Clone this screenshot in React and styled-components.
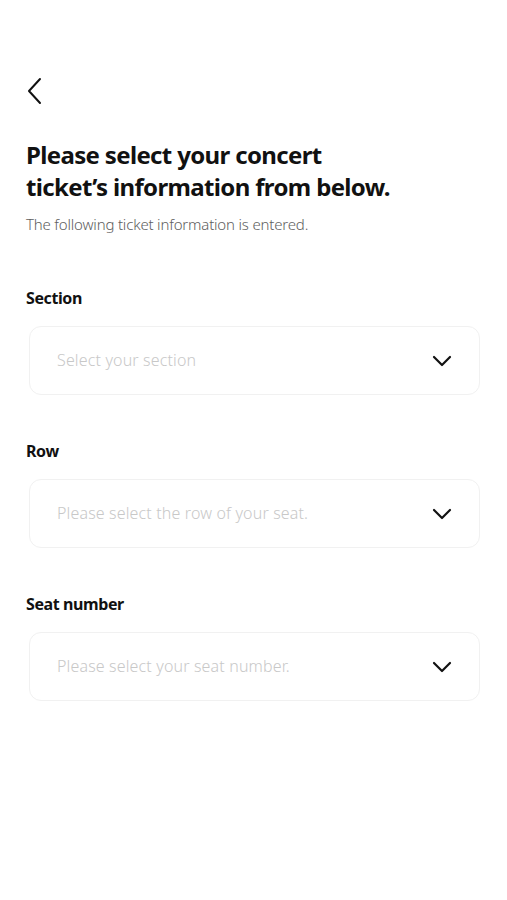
import React from 'react';
import styled, { createGlobalStyle } from 'styled-components';

const GlobalStyle = createGlobalStyle`
  html, body {
    margin: 0;
    padding: 0;
    background: #ffffff;
  }
  body {
    font-family: "Noto Sans", "Noto Sans CJK KR", sans-serif;
    color: #111;
  }
`;

const Screen = styled.div`
  width: 507px;
  min-height: 900px;
  background: #fff;
  padding: 76px 26px 0 26px;
  box-sizing: border-box;
`;

const BackButton = styled.button`
  display: flex;
  align-items: center;
  justify-content: center;
  width: 20px;
  height: 30px;
  padding: 0;
  margin: 0 0 0 -1px;
  border: none;
  background: none;
  cursor: pointer;
`;

const Title = styled.h1`
  margin: 33px 0 0 0;
  font-size: 24px;
  line-height: 32px;
  font-weight: 700;
  letter-spacing: -0.65px;
  color: #111;
`;

const Subtitle = styled.p`
  margin: 10px 0 0 0;
  font-size: 15px;
  line-height: 22px;
  font-weight: 300;
  letter-spacing: -0.18px;
  color: #5e5e5e;
`;

const Form = styled.div`
  display: flex;
  flex-direction: column;
  gap: 45px;
  margin-top: 52px;
`;

const Field = styled.div`
  display: flex;
  flex-direction: column;
`;

const Label = styled.div`
  font-size: 16px;
  line-height: 22px;
  font-weight: 700;
  letter-spacing: -0.4px;
  color: #111;
`;

const SelectBox = styled.div`
  display: flex;
  align-items: center;
  justify-content: space-between;
  height: 69px;
  margin: 17px 1px 0 3px;
  padding: 0 27px 0 27px;
  border: 1px solid #f1f1f1;
  border-radius: 12px;
  box-sizing: border-box;
  background: #fff;
  cursor: pointer;
`;

const Placeholder = styled.span`
  font-size: 16px;
  font-weight: 300;
  letter-spacing: 0.15px;
  line-height: 20px;
  margin-top: -2px;
  color: #c8c8c8;
`;

const Chevron = () => (
  <svg width="20" height="12" viewBox="0 0 20 12" fill="none">
    <path d="M2 2l8 8 8-8" stroke="#111" strokeWidth="2.2" strokeLinecap="round" strokeLinejoin="round" />
  </svg>
);

const fields = [
  { label: 'Section', placeholder: 'Select your section' },
  { label: 'Row', placeholder: 'Please select the row of your seat.' },
  { label: 'Seat number', placeholder: 'Please select your seat number.' },
];

export default function App() {
  return (
    <>
      <GlobalStyle />
      <Screen>
        <BackButton aria-label="Back">
          <svg width="16" height="28" viewBox="0 0 16 28" fill="none">
            <path d="M13 2L2 14l11 12" stroke="#111" strokeWidth="2" strokeLinecap="round" strokeLinejoin="round" />
          </svg>
        </BackButton>
        <Title>
          Please select your concert
          <br />
          ticket’s information from below.
        </Title>
        <Subtitle>The following ticket information is entered.</Subtitle>
        <Form>
          {fields.map((f) => (
            <Field key={f.label}>
              <Label>{f.label}</Label>
              <SelectBox>
                <Placeholder>{f.placeholder}</Placeholder>
                <Chevron />
              </SelectBox>
            </Field>
          ))}
        </Form>
      </Screen>
    </>
  );
}
